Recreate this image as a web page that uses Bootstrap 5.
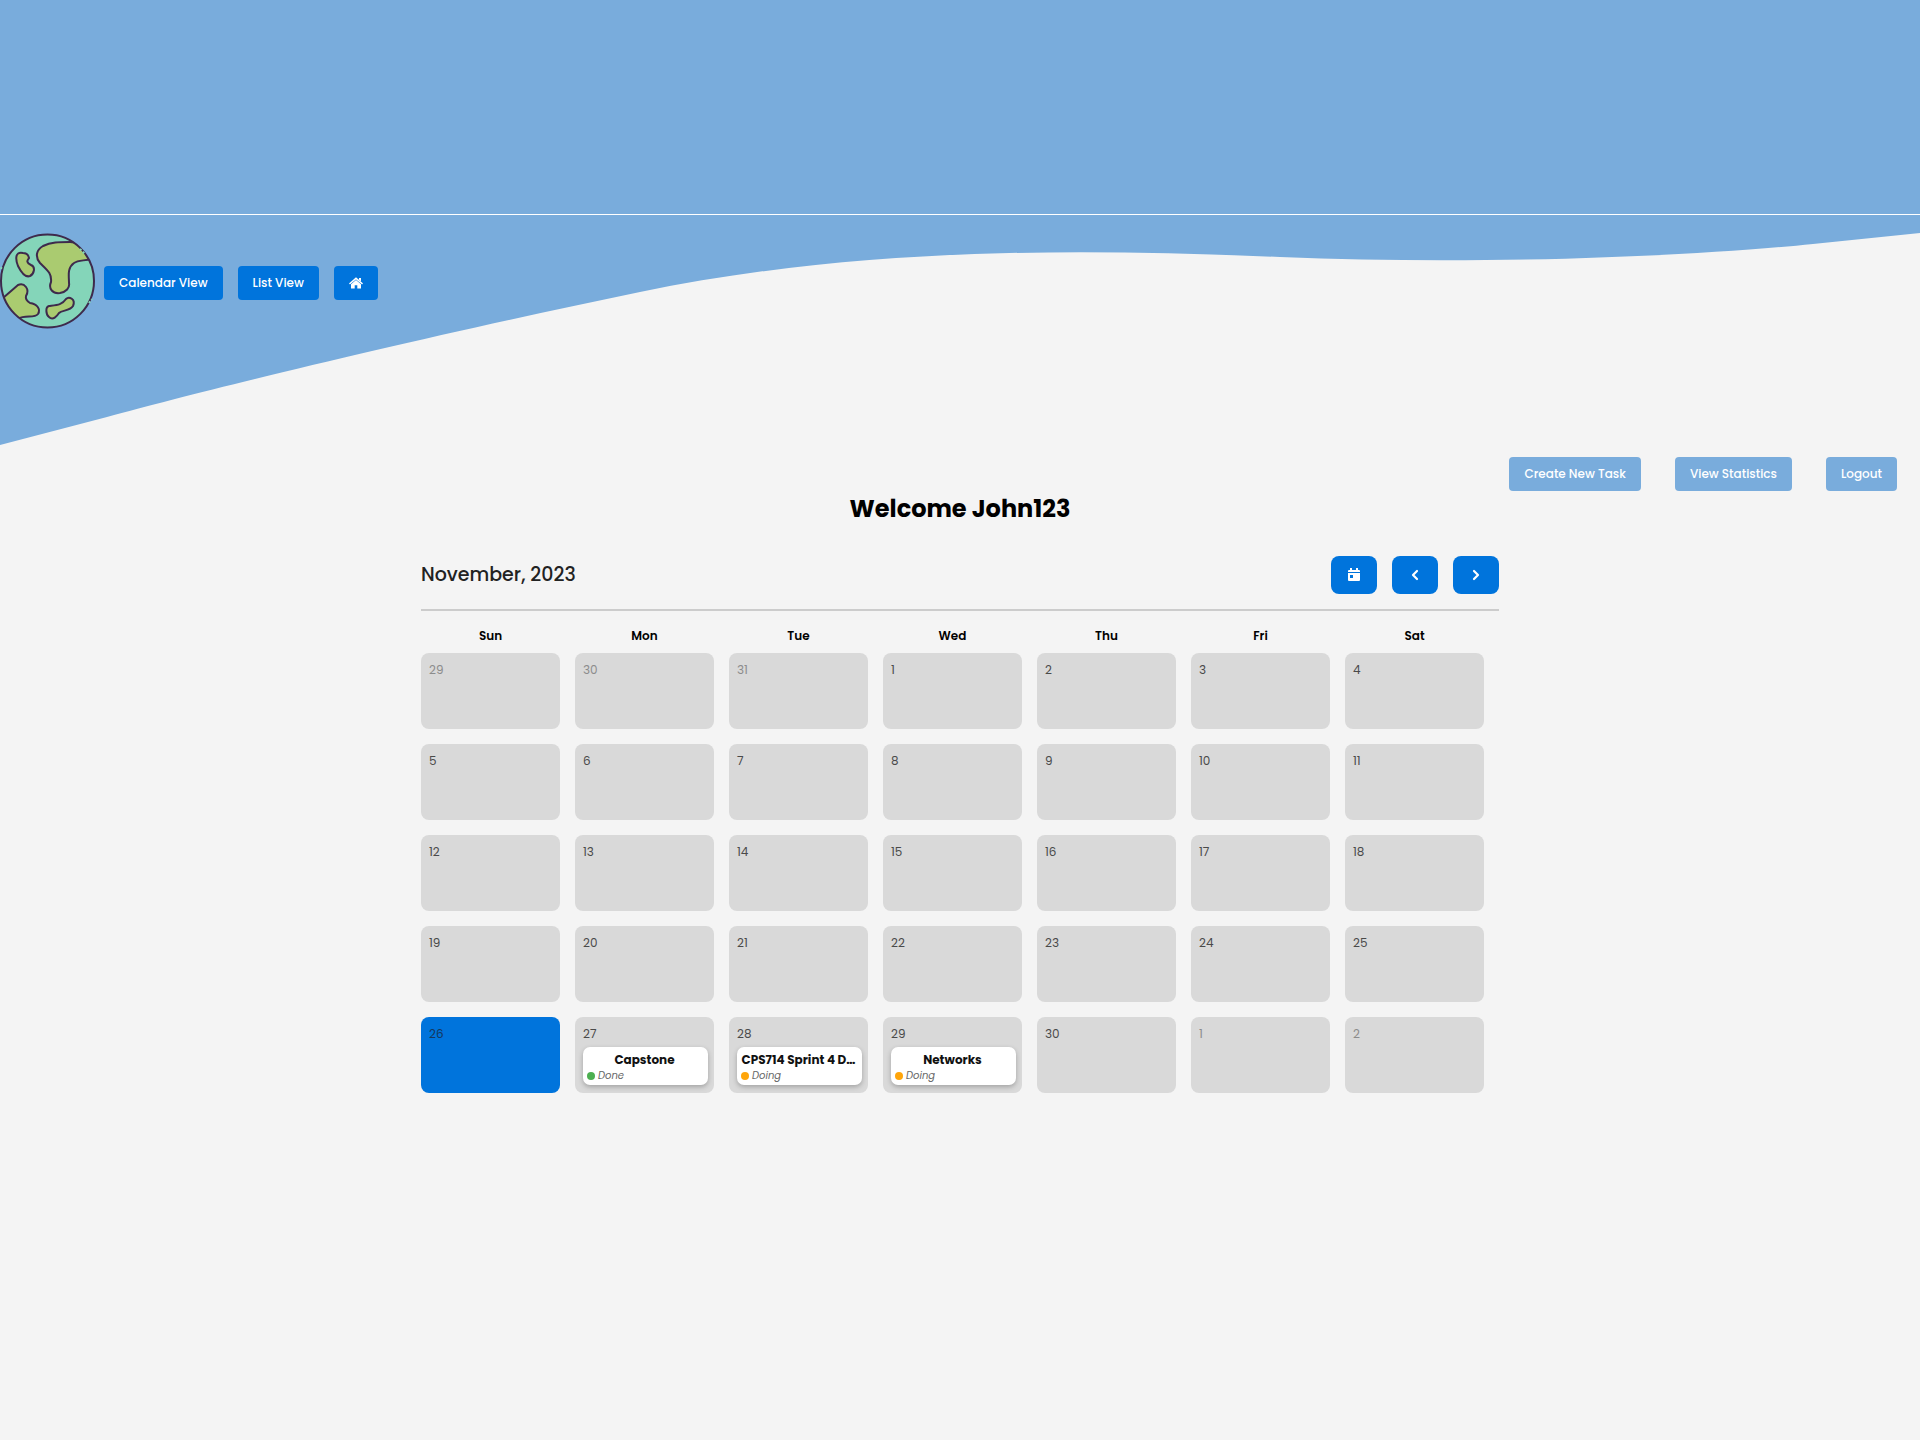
<!DOCTYPE html>
<html lang="en">
<head>
<meta charset="utf-8">
<meta name="viewport" content="width=device-width, initial-scale=1">
<title>Task Calendar</title>
<link href="https://cdn.jsdelivr.net/npm/bootstrap@5.3.0/dist/css/bootstrap.min.css" rel="stylesheet">
<style>
:root { --sky: #79acdc; --azure: #0074dc; --paper: #f4f4f4; }
body { background: var(--paper); font-family: Poppins, Inter, "Open Sans", sans-serif; font-size: 12px; line-height: 20px; color: #000; }
.sky-band { height: 214px; background: var(--sky); border-bottom: 1px solid #fff; box-sizing: content-box; }
.wave-zone { height: 241px; }
.wave { z-index: 0; height: 231px; }
.top-nav { z-index: 1; padding-top: 17px; }
.nav-buttons { gap: 15px; padding: 4px 0 0 8px; }
.globe { width: 96px; height: 98px; }
.btn-task { --bs-btn-color: #fff; --bs-btn-hover-color: #fff; --bs-btn-bg: var(--azure); --bs-btn-hover-bg: #0063bd; --bs-btn-active-color: #fff; --bs-btn-active-bg: #0057a8; --bs-btn-border-width: 0; --bs-btn-padding-x: 15px; --bs-btn-padding-y: 7px; --bs-btn-font-size: 12px; --bs-btn-font-weight: 500; --bs-btn-line-height: 20px; --bs-btn-border-radius: 4px; }
.btn-soft { --bs-btn-bg: var(--sky); --bs-btn-hover-bg: #6299cc; }
.btn-step { --bs-btn-border-radius: 8px; width: 46px; height: 38px; }
.step-group { gap: 15px; }
.actions { gap: 34px; padding: 1px 23px 0 0; }
.welcome { font-size: 24px; line-height: 36px; }
.calendar { max-width: 1078px; }
.cal-head { padding-bottom: 15px; border-bottom: 2px solid #ccc; margin-top: 29px; }
.month-title { font-size: 19px; line-height: 30px; font-weight: 500; color: #222; }
.week-grid { display: grid; grid-template-columns: repeat(7, minmax(0, 1fr)); }
.weekday-row { padding: 15px 0 7px; }
.weekday { margin-right: 15px; font-size: 12px; font-weight: 600; }
.day { height: 76px; margin: 0 15px 15px 0; padding: 7px 6px 0 8px; background: #d9d9d9; border-radius: 8px; color: #4a4a4a; }
.day.other { color: #8c8c8c; }
.day.today { background: var(--azure); color: #14375e; }
.task { height: 38px; margin-top: 3px; padding: 4px 6px 0 4px; background: #fff; border-radius: 7px; box-shadow: 0 2px 5px rgba(0,0,0,.25); color: #111; }
.task-name { font-size: 12px; line-height: 18px; font-weight: 700; }
.task-state { font-size: 10px; line-height: 14px; color: #666; gap: 3px; }
.dot { width: 8px; height: 8px; background: #ffa50a; }
.dot.done { background: #4caf50; }
</style>
<script src="https://cdn.jsdelivr.net/npm/bootstrap@5.3.0/dist/js/bootstrap.bundle.min.js"></script>
</head>
<body>
<header>
  <div class="sky-band"></div>
  <div class="wave-zone position-relative">
    <svg class="wave position-absolute top-0 start-0 w-100" viewBox="0 0 1920 231" preserveAspectRatio="none" aria-hidden="true"><path fill="#79acdc" d="M0 230L107 202C213 173 427 121 640 77C853 33 1067 33 1280 42C1493 51 1707 40 1813 29L1920 18V0H0Z"/></svg>
    <nav class="top-nav position-relative d-flex align-items-center" aria-label="Views">
      <svg class="globe" viewBox="0 0 96 98" aria-hidden="true">
        <defs><clipPath id="disc"><circle cx="47.500" cy="49" r="46.500"/></clipPath></defs>
        <circle cx="47.500" cy="49" r="46.500" fill="#84d5b9"/>
        <g fill="#aacb70" stroke="#3e2a4c" stroke-width="2" stroke-linejoin="round" stroke-linecap="round">
          <g clip-path="url(#disc)"><path d="M70 10C59 10 51 10 43 14C36 18 35 25 40 31C47 38 52 41 51 50C48 57 53 62 60 61C66 60 70 56 69 51C69 44 67 36 74 31C78 28 83 29 92 27L86 17C82 13 77 10 70 10Z"/>
          <path d="M3 66L18 53Q23 51 26 55Q29 59 26 64Q25 68 30 71C37 72 41 77 38 82C34 87 25 82 18 87L8 92Z"/></g>
          <path d="M23 21C14 19 16 29 18 34C21 40 25 46 30 44C34 42 36 35 31 33C25 30 28 28 29 26Q28 21 23 21Z"/>
          <path d="M49 74C45 75 46 83 49 85C53 89 57 84 59 81C62 78 70 79 73 74C76 67 69 64 66 67C62 73 57 73 49 74Z"/>
        </g>
        <circle cx="47.500" cy="49" r="46.500" fill="none" stroke="#3e2a4c" stroke-width="2"/>
        <path d="M80 17L85 22M1 37L2 33M89 71L92 67" stroke="#84d5b9" stroke-width="2" stroke-dasharray="2 2"/>
      </svg>
      <div class="nav-buttons d-flex">
        <button type="button" class="btn btn-task">Calendar View</button>
        <button type="button" class="btn btn-task">List View</button>
        <button type="button" class="btn btn-task" aria-label="Home"><svg class="d-block my-1" width="14" height="12" viewBox="0 0 14 12" aria-hidden="true"><path d="M1 6.500L7 1.300L13 6.500" fill="none" stroke="#fff" stroke-width="1.600" stroke-linecap="round"/><path d="M10 1h2v3.500l-2-1.700ZM7 3.100L12 7.300V11.500H8.300V8.200H5.700V11.500H2V7.300Z" fill="#fff"/></svg></button>
      </div>
    </nav>
  </div>
</header>
<main>
  <div class="actions d-flex justify-content-end">
    <button type="button" class="btn btn-task btn-soft">Create New Task</button>
    <button type="button" class="btn btn-task btn-soft">View Statistics</button>
    <button type="button" class="btn btn-task btn-soft">Logout</button>
  </div>
  <h1 class="welcome text-center fw-bold mb-0">Welcome John123</h1>
  <section class="calendar mx-auto" aria-label="Calendar">
    <div class="cal-head d-flex justify-content-between align-items-center">
      <h2 class="month-title mb-0">November, 2023</h2>
      <div class="step-group d-flex">
        <button type="button" class="btn btn-task btn-step d-flex align-items-center justify-content-center" aria-label="Today"><svg width="12" height="14" viewBox="0 0 12 14" aria-hidden="true"><path fill="#fff" fill-rule="evenodd" d="M0 3Q0 2 1 2H2V0H4V2H8V0H10V2H11Q12 2 12 3V4H0ZM0 5H12V12Q12 13 11 13H1Q0 13 0 12ZM2 7V10H5V7Z"/></svg></button>
        <button type="button" class="btn btn-task btn-step d-flex align-items-center justify-content-center" aria-label="Previous month"><svg width="8" height="12" viewBox="0 0 8 12" aria-hidden="true"><path d="M6 2L2 6L6 10" fill="none" stroke="#fff" stroke-width="2.200" stroke-linecap="round" stroke-linejoin="round"/></svg></button>
        <button type="button" class="btn btn-task btn-step d-flex align-items-center justify-content-center" aria-label="Next month"><svg width="8" height="12" viewBox="0 0 8 12" aria-hidden="true"><path d="M2 2L6 6L2 10" fill="none" stroke="#fff" stroke-width="2.200" stroke-linecap="round" stroke-linejoin="round"/></svg></button>
      </div>
    </div>
    <div class="week-grid weekday-row text-center">
      <div class="weekday">Sun</div><div class="weekday">Mon</div><div class="weekday">Tue</div><div class="weekday">Wed</div><div class="weekday">Thu</div><div class="weekday">Fri</div><div class="weekday">Sat</div>
    </div>
    <div class="week-grid">
      <div class="day other">29</div><div class="day other">30</div><div class="day other">31</div><div class="day">1</div><div class="day">2</div><div class="day">3</div><div class="day">4</div>
      <div class="day">5</div><div class="day">6</div><div class="day">7</div><div class="day">8</div><div class="day">9</div><div class="day">10</div><div class="day">11</div>
      <div class="day">12</div><div class="day">13</div><div class="day">14</div><div class="day">15</div><div class="day">16</div><div class="day">17</div><div class="day">18</div>
      <div class="day">19</div><div class="day">20</div><div class="day">21</div><div class="day">22</div><div class="day">23</div><div class="day">24</div><div class="day">25</div>
      <div class="day today">26</div>
      <div class="day">27
        <div class="task"><div class="task-name text-center text-truncate">Capstone</div><div class="task-state d-flex align-items-center fst-italic"><span class="dot done rounded-circle"></span>Done</div></div>
      </div>
      <div class="day">28
        <div class="task"><div class="task-name text-center text-nowrap">CPS714 Sprint 4 D…</div><div class="task-state d-flex align-items-center fst-italic"><span class="dot rounded-circle"></span>Doing</div></div>
      </div>
      <div class="day">29
        <div class="task"><div class="task-name text-center text-truncate">Networks</div><div class="task-state d-flex align-items-center fst-italic"><span class="dot rounded-circle"></span>Doing</div></div>
      </div>
      <div class="day">30</div><div class="day other">1</div><div class="day other">2</div>
    </div>
  </section>
</main>
</body>
</html>
